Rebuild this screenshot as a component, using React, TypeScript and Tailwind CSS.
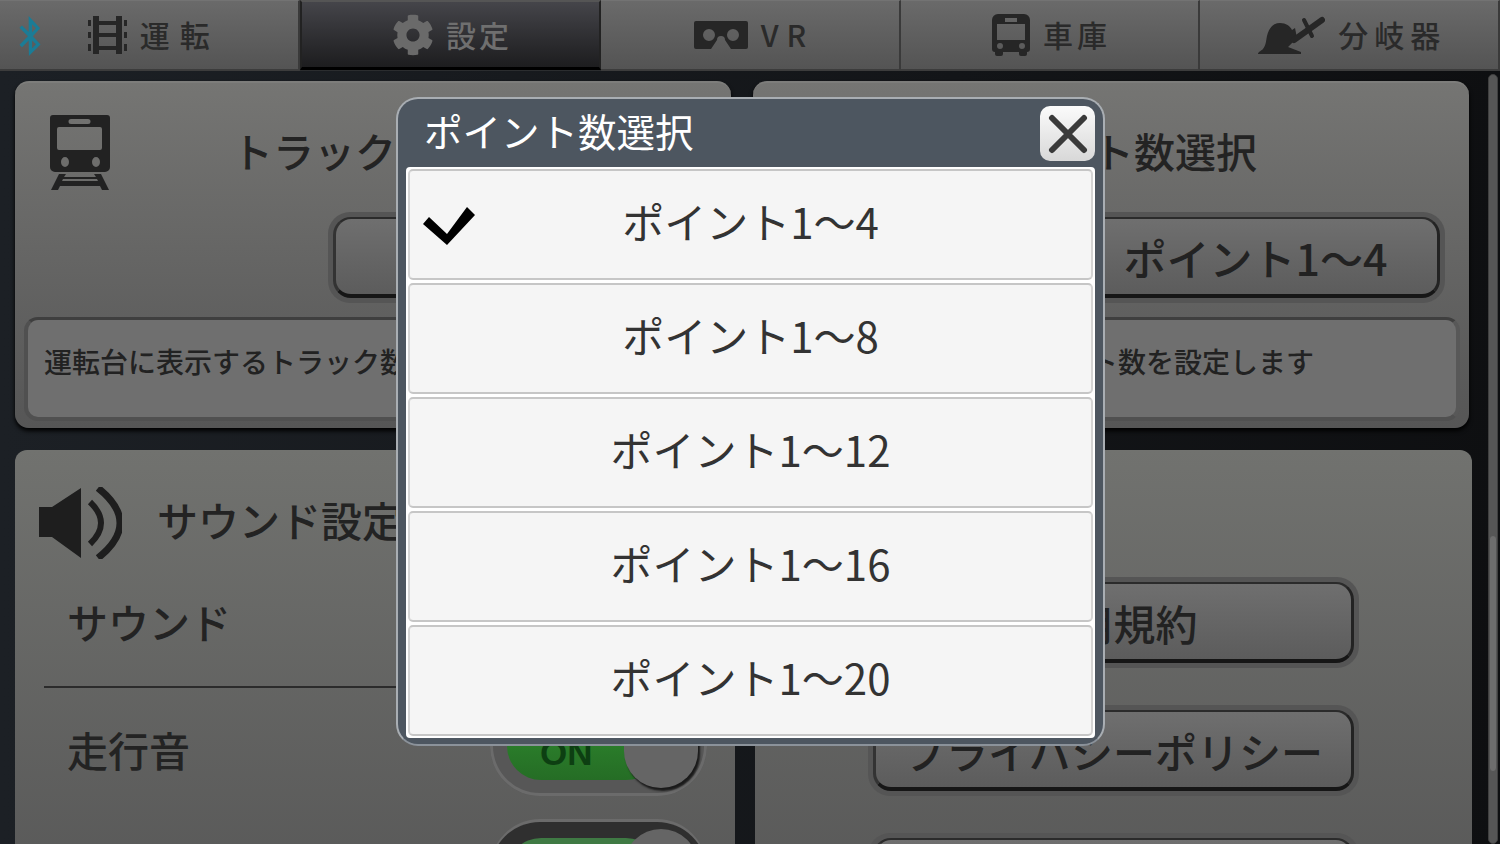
import type { ReactNode } from "react";
import { FaBluetoothB, FaCog } from "react-icons/fa";

const jp = { fontFamily: '"Noto Sans CJK JP", "Liberation Sans", sans-serif' };

function RailIcon() {
  return (
    <svg width="39" height="38" viewBox="0 0 39 38" fill="#262626">
      <rect x="5" y="0" width="6" height="38" />
      <rect x="28" y="0" width="6" height="38" />
      <rect x="11" y="5" width="17" height="4" />
      <rect x="11" y="17" width="17" height="4" />
      <rect x="11" y="30" width="17" height="4" />
      <rect x="0" y="4" width="3" height="6" />
      <rect x="0" y="16" width="3" height="6" />
      <rect x="0" y="28" width="3" height="7" />
      <rect x="36" y="4" width="3" height="6" />
      <rect x="36" y="16" width="3" height="6" />
      <rect x="36" y="28" width="3" height="7" />
    </svg>
  );
}

function VrIcon() {
  return (
    <svg width="54" height="28" viewBox="0 0 54 28">
      <path
        fill="#262626"
        fillRule="evenodd"
        d="M2 0h50a2 2 0 0 1 2 2v24a2 2 0 0 1-2 2H37l-6-9a4 4 0 0 0-8 0l-6 9H2a2 2 0 0 1-2-2V2a2 2 0 0 1 2-2zM15 8a6 6 0 1 0 0 12 6 6 0 0 0 0-12zM39 8a6 6 0 1 0 0 12 6 6 0 0 0 0-12z"
      />
    </svg>
  );
}

function BusIcon() {
  return (
    <svg width="38" height="42" viewBox="0 0 38 42">
      <path
        fill="#262626"
        fillRule="evenodd"
        d="M6 0h26a6 6 0 0 1 6 6v29a3 3 0 0 1-3 3v2a2 2 0 0 1-2 2h-4a2 2 0 0 1-2-2v-2H11v2a2 2 0 0 1-2 2H5a2 2 0 0 1-2-2v-2a3 3 0 0 1-3-3V6a6 6 0 0 1 6-6zM13 4v4h12V4zM5 10v16h28V10zM8 29a3 3 0 1 0 0 6 3 3 0 0 0 0-6zM30 29a3 3 0 1 0 0 6 3 3 0 0 0 0-6z"
      />
    </svg>
  );
}

function PointIcon() {
  return (
    <svg width="67" height="38" viewBox="0 0 67 38">
      <path fill="#262626" d="M0 38c0-2 3-3 5-5 3-4 3-8 4-13C11 11 16 7 22 7c6 0 10 3 12 7l3-2 2 10-9 9 13 5v2z" />
      <path d="M36 24 64 4" stroke="#262626" strokeWidth="6" strokeLinecap="round" />
      <path d="M46 4 54 20" stroke="#262626" strokeWidth="4" strokeLinecap="round" />
    </svg>
  );
}

function TrainIcon() {
  return (
    <svg width="60" height="75" viewBox="0 0 60 75">
      <path
        fill="#222"
        fillRule="evenodd"
        d="M3 0h54a3 3 0 0 1 3 3v49a5 5 0 0 1-5 5H5a5 5 0 0 1-5-5V3a3 3 0 0 1 3-3zM21 4a2.5 2.5 0 0 0 0 5h17a2.5 2.5 0 0 0 0-5zM9 12a2 2 0 0 0-2 2v19a2 2 0 0 0 2 2h41a2 2 0 0 0 2-2V14a2 2 0 0 0-2-2zM15 42a4 5 0 1 0 0 10 4 5 0 0 0 0-10zM46 42a4 5 0 1 0 0 10 4 5 0 0 0 0-10z"
      />
      <path fill="#222" d="M9 59h7l-2 3h32l-2-3h7l8 16h-7l-2-4H10l-2 4H1zM12 66h36l-1-2H13z" />
    </svg>
  );
}

function SpeakerIcon() {
  return (
    <svg width="84" height="72" viewBox="0 0 84 72">
      <path fill="#1e1e1e" d="M1 20H14L43 1V71L14 50H1z" />
      <path d="M52 15Q74 36 52 57" fill="none" stroke="#1e1e1e" strokeWidth="6" />
      <path d="M60 1Q104 36 60 71" fill="none" stroke="#1e1e1e" strokeWidth="7" />
    </svg>
  );
}

const tabs = [
  { label: "運転", icon: <RailIcon />, text: "tracking-[10px] mr-[-10px]", gap: "gap-[13px]" },
  { label: "設定", icon: <FaCog size={42} color="#6a6a6a" />, text: "tracking-[3px] mr-[-3px] text-[#6f6f6f]", gap: "gap-[12px]", active: true },
  { label: "VR", icon: <VrIcon />, text: "tracking-[8px] mr-[-8px]", gap: "gap-[13px]" },
  { label: "車庫", icon: <BusIcon />, text: "tracking-[4px] mr-[-4px]", gap: "gap-[13px]" },
  { label: "分岐器", icon: <PointIcon />, text: "tracking-[6px] mr-[-6px]", gap: "gap-[13px]" },
];

function TabBar() {
  return (
    <div className="relative flex h-[71px] shrink-0 bg-[#2b2d2f]">
      <FaBluetoothB size={40} color="#1b7c96" className="absolute left-[10px] top-[16px]" />
      {tabs.map((tab) => (
        <div
          key={tab.label}
          className={
            tab.active
              ? `flex flex-1 items-center justify-center ${tab.gap} mb-[1px] border-t-2 border-r-2 border-b-[3px] border-l-2 border-t-[#555] border-r-[#222] border-b-black border-l-[#222] bg-gradient-to-b from-[#45454a] to-[#1d1d1f]`
              : `flex flex-1 items-center justify-center ${tab.gap} border-t border-r-2 border-b-2 border-t-[#737373] border-r-[#3a3a3a] border-b-[#3c3c3c] bg-gradient-to-b from-[#6a6a6a] to-[#545454]`
          }
        >
          {tab.icon}
          <span className={`pb-[2px] text-[30px] font-medium leading-none text-[#2a2a2a] ${tab.text}`}>{tab.label}</span>
        </div>
      ))}
    </div>
  );
}

function WellButton({ label, className, textSize }: { label: string; className: string; textSize: string }) {
  return (
    <div className={`rounded-[22px] bg-[#555555] p-[5px] ${className}`}>
      <div className={`flex h-full w-full items-center justify-center rounded-[18px] border-t-2 border-r-[3px] border-b-[4px] border-l-[3px] border-t-[#2b2b2b] border-r-[#232323] border-b-[#161616] border-l-[#333] bg-gradient-to-b from-[#6f6f6f] to-[#5c5c5c] pt-[2px] font-medium leading-none text-[#222] ${textSize}`}>
        {label}
      </div>
    </div>
  );
}

function SelectPanel({ icon, title, button, desc, className }: { icon?: ReactNode; title: string; button: string; desc: string; className: string }) {
  return (
    <section className={`flex h-[347px] flex-col rounded-[14px] border-t-2 border-[#7d7d7b] bg-gradient-to-b from-[#757573] to-[#565656] shadow-[0_3px_4px_#000] ${className}`}>
      <div className="mt-[32px] flex h-[75px] items-center pl-[35px]">
        <div className="w-[60px]">{icon}</div>
        <h2 className="mb-[4px] ml-[122px] text-[41px] font-medium leading-none text-[#232323]">{title}</h2>
      </div>
      <WellButton label={button} textSize="text-[43px]" className="ml-[313px] mt-[22px] h-[91px] w-[379px]" />
      <div className="mx-[9px] mt-[14px] h-[104px] rounded-[14px] border-t-[3px] border-r-[4px] border-b-[4px] border-l-[4px] border-t-[#3f3f3f] border-r-[#585858] border-b-[#505050] border-l-[#505050] bg-[#6f6f6f] pl-[16px] pt-[22px] text-[28px] font-medium leading-[38px] text-[#222]">
        {desc}
      </div>
    </section>
  );
}

function Toggle({ dim }: { dim?: boolean }) {
  return (
    <div className={`relative h-[101px] w-[217px] rounded-[50px] pl-[17px] pt-[16px] ${dim ? "bg-[#2f2f2f] shadow-[0_-3px_0_#6b6b6b]" : "bg-[#575757] shadow-[inset_0_0_0_3px_#6b6b6b]"}`}>
      <div className={`flex h-[69px] w-[153px] items-center rounded-[34px] pl-[33px] ${dim ? "bg-[#3f7a44]" : "bg-gradient-to-b from-[#2f8a2f] to-[#256d25]"}`}>
        <span className="mt-[13px] text-[35px] font-bold leading-none text-[#0d3f12]" style={{ fontFamily: '"Liberation Sans", sans-serif' }}>ON</span>
      </div>
      <div className="absolute right-[9px] top-[7px] h-[86px] w-[74px] rounded-full bg-[#656565] shadow-[2px_3px_2px_#1a1a1a]" />
    </div>
  );
}

function SoundRow({ label, line, top, dim }: { label: string; line?: boolean; top: string; dim?: boolean }) {
  return (
    <div className={`mx-[29px] flex h-[128px] shrink-0 ${line ? "border-b-2 border-[#2b2b2b]" : ""}`}>
      <span className="ml-[23px] mt-[41px] text-[41px] font-medium leading-none text-[#232323]">{label}</span>
      <div className={`ml-auto mr-[-1px] ${top}`}>
        <Toggle dim={dim} />
      </div>
    </div>
  );
}

function ModalOption({ label, checked }: { label: string; checked?: boolean }) {
  return (
    <div className="relative flex h-[111px] items-center justify-center rounded-[5px] border-2 border-[#c6c6c6] border-r-[#d4d4d4] border-l-[#d4d4d4] bg-[#f5f5f5] pb-[8px] text-[42px] leading-none text-[#333]">
      {checked && (
        <svg className="absolute left-[13px] top-[36px]" width="52" height="40" viewBox="0 0 52 40">
          <polygon points="0,17 6,10 24,27 44,0 52,8 24,38" fill="#000" />
        </svg>
      )}
      {label}
    </div>
  );
}

export default function App() {
  return (
    <div className="relative h-[844px] w-[1500px] overflow-hidden bg-gradient-to-r from-[#1c2025] to-[#0e0f11]" style={jp}>
      <TabBar />

      <div className="flex gap-[22px] pl-[15px] pt-[10px]">
        <SelectPanel icon={<TrainIcon />} title="トラック数選択" button="トラック1〜4" desc="運転台に表示するトラック数を設定します" className="w-[716px]" />
        <SelectPanel title="ポイント数選択" button="ポイント1〜4" desc="運転台に表示するポイント数を設定します" className="w-[716px]" />
      </div>

      <div className="mt-[22px] flex gap-[20px] pl-[15px]">
        <section className="h-[500px] w-[720px] rounded-t-[12px] bg-gradient-to-b from-[#71726f] to-[#555555] pt-[35px]">
          <div className="flex h-[75px] items-center pl-[23px]">
            <SpeakerIcon />
            <h2 className="mb-[6px] ml-[35px] text-[41px] font-medium leading-none text-[#232323]">サウンド設定</h2>
          </div>
          <SoundRow label="サウンド" line top="mt-[6px]" />
          <SoundRow label="走行音" line={false} top="mt-[7px]" />
          <SoundRow label="警笛" top="mt-[6px]" dim />
        </section>
        <section className="flex h-[500px] w-[717px] flex-col gap-[37px] rounded-t-[12px] bg-gradient-to-b from-[#71726f] to-[#555555] pl-[113px] pt-[127px]">
          <WellButton label="利用規約" textSize="text-[42px]" className="h-[91px] w-[491px] shrink-0" />
          <WellButton label="プライバシーポリシー" textSize="text-[42px]" className="h-[91px] w-[491px] shrink-0" />
          <WellButton label="ライセンス" textSize="text-[42px]" className="h-[91px] w-[491px] shrink-0" />
        </section>
      </div>

      {/* scrollbar */}
      <div className="absolute right-[2px] top-[74px] h-[770px] w-[10px] rounded-full border border-[#3f3f3f] bg-[#565656]">
        <div className="mt-[460px] h-[237px] w-full rounded-full border border-[#555] bg-[#6d6d6d]" />
      </div>

      {/* dialog */}
      <div className="absolute left-[396px] top-[97px] h-[649px] w-[709px] rounded-[22px] border-2 border-[#a9aeb3] border-b-[#8b929a] bg-[#4d5660] px-[8px]">
        <div className="flex h-[68px] items-center pl-[18px]">
          <h1 className="mb-[6px] text-[38.5px] font-normal leading-none text-white">ポイント数選択</h1>
          <div className="absolute right-[8px] top-[7px] flex h-[55px] w-[55px] items-center justify-center rounded-[10px] bg-gradient-to-b from-[#fbfbfb] to-[#d8d8d8]">
            <svg width="40" height="40" viewBox="0 0 40 40">
              <path d="M4 4 36 36M36 4 4 36" stroke="#3a3a3a" strokeWidth="6" strokeLinecap="round" />
            </svg>
          </div>
        </div>
        <div className="flex flex-col gap-[3px] rounded-[4px] bg-white p-[2px]">
          <ModalOption label="ポイント1〜4" checked />
          <ModalOption label="ポイント1〜8" />
          <ModalOption label="ポイント1〜12" />
          <ModalOption label="ポイント1〜16" />
          <ModalOption label="ポイント1〜20" />
        </div>
      </div>
    </div>
  );
}
